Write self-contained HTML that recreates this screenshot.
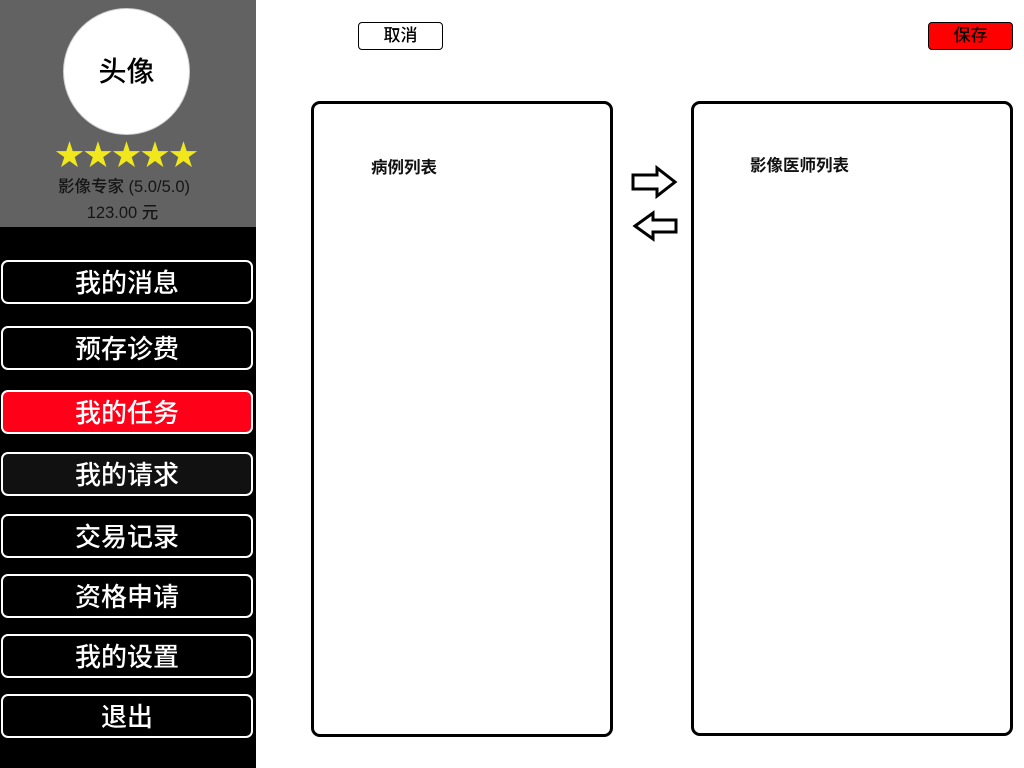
<!DOCTYPE html>
<html><head><meta charset="utf-8"><style>
*{margin:0;padding:0;box-sizing:border-box}
body{width:1024px;height:768px;background:#fff;position:relative;overflow:hidden;font-family:"Liberation Sans","Noto Sans CJK SC",sans-serif}
.side{position:absolute;left:0;top:0;width:256px;height:768px;background:#000}
.top{position:absolute;left:0;top:0;width:256px;height:227px;background:#626262}
.av{position:absolute;left:63px;top:8px;width:127px;height:127px;border-radius:50%;background:#fff;border:1px solid #ccc;font-size:28px;line-height:125px;text-align:center;color:#000;font-weight:500}
.stars{position:absolute;left:55px;top:139px;color:#f0e81c;font-size:29px;line-height:34px}
.stars span{display:inline-block;width:28.5px;text-align:center}
.t1{position:absolute;left:0;width:248px;top:173px;text-align:center;font-size:16.5px;color:#151515;font-weight:500}
.t2{position:absolute;left:0;width:245px;top:199px;text-align:center;font-size:16.5px;color:#151515;font-weight:500}
.b{position:absolute;left:1px;width:252px;height:44px;border:2.5px solid #fff;border-radius:7px;color:#fff;font-size:26px;line-height:42px;text-align:center;background:#000;font-weight:500}
.p{position:absolute;border:3px solid #000;border-radius:9px}
.pt{position:absolute;font-size:16.5px;font-weight:bold;color:#111}
.btn{position:absolute;top:22px;height:28px;border:1.5px solid #000;border-radius:4px;font-size:17px;line-height:25px;text-align:center;font-weight:500}
</style></head><body>
<div class="side">
<div class="top">
<div class="av">头像</div>
<div class="stars"><span>★</span><span>★</span><span>★</span><span>★</span><span>★</span></div>
<div class="t1">影像专家 (5.0/5.0)</div>
<div class="t2">123.00 元</div>
</div>
<div class="b" style="top:260px">我的消息</div>
<div class="b" style="top:326px">预存诊费</div>
<div class="b" style="top:390px;background:#ff0019">我的任务</div>
<div class="b" style="top:452px;background:#111">我的请求</div>
<div class="b" style="top:514px">交易记录</div>
<div class="b" style="top:574px">资格申请</div>
<div class="b" style="top:634px">我的设置</div>
<div class="b" style="top:694px">退出</div>
</div>
<div class="btn" style="left:358px;width:85px;background:#fff">取消</div>
<div class="btn" style="left:928px;width:85px;background:#f00">保存</div>
<div class="p" style="left:311px;top:101px;width:302px;height:636px"></div>
<div class="p" style="left:691px;top:101px;width:322px;height:635px"></div>
<div class="pt" style="left:371px;top:154px">病例列表</div>
<div class="pt" style="left:750px;top:152px">影像医师列表</div>
<svg style="position:absolute;left:0;top:0" width="1024" height="768">
<path d="M633 175H657V168L675 182L657 196V189H633Z" fill="#fff" stroke="#000" stroke-width="3" stroke-linejoin="miter"/>
<path d="M676 220H653V213L635 226L653 239V232H676Z" fill="#fff" stroke="#000" stroke-width="3" stroke-linejoin="miter"/>
</svg>
</body></html>
